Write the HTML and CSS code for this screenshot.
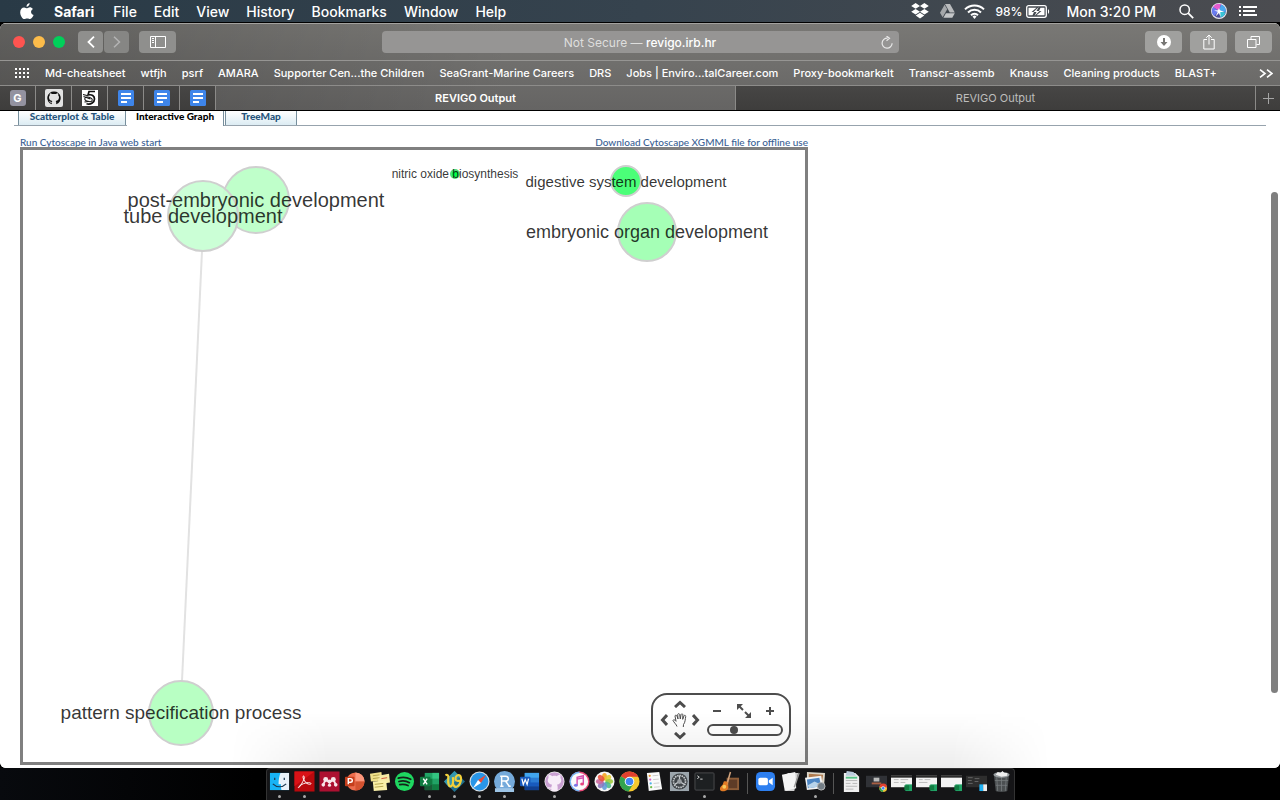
FILE: index.html
```html
<!DOCTYPE html>
<html lang="en">
<head>
<meta charset="utf-8">
<title>REVIGO Output</title>
<link rel="stylesheet" href="styles.css">
</head>
<body>
<header class="menubar">
  <nav class="menus">
    <button class="apple" aria-label="Apple menu"><svg width="14" height="17" viewBox="0 0 14 17" fill="#fff"><path d="M9.600 0C9.700 1.900 8.200 3.700 6.500 3.700 6.300 2 7.900.2 9.600 0zM9.800 4.300c1 0 2.300.6 3.100 1.700-2.700 1.600-2.300 5 .7 6.100-.6 1.600-2 4-3.500 4-1.100 0-1.500-.7-2.900-.7s-1.800.7-2.900.7C2.300 16.100.2 12.500.2 9.300.2 6.200 2.100 4.400 4.100 4.400c1.300 0 2.200.8 3.100.8.8 0 1.500-.9 2.600-.9z"/></svg></button>
    <button class="app">Safari</button>
    <button>File</button>
    <button>Edit</button>
    <button>View</button>
    <button>History</button>
    <button>Bookmarks</button>
    <button>Window</button>
    <button>Help</button>
  </nav>
  <div class="status">
    <svg class="s-dropbox" width="18" height="16" viewBox="0 0 18 16" fill="#fff"><path d="M4.600 0 9 2.900 4.600 5.700.2 2.900zM13.400 0l4.400 2.900-4.400 2.800L9 2.900zM4.600 5.900 9 8.700l-4.400 2.900L.2 8.700zM13.400 5.900l4.400 2.800-4.400 2.900L9 8.700zM9 9.800l4.300 2.800L9 15.600l-4.300-3z"/></svg>
    <svg class="s-drive" width="15" height="14" viewBox="0 0 15 14"><path d="M5 0h5l4.800 8.500h-5z" fill="#b9bbbd"/><path d="M4.600.7 7.200 5.300 2.700 13.300 0 8.700z" fill="#a4a7aa"/><path d="M5.900 9.200h8.900L12.300 13.700H3.400z" fill="#c4c6c8"/></svg>
    <svg class="s-wifi" width="21" height="15" viewBox="0 0 21 15" fill="none" stroke="#fff" stroke-width="2"><path d="M1 5.400a13.500 13.500 0 0 1 19 0M4 8.500a9.200 9.200 0 0 1 13 0M7 11.300a5 5 0 0 1 7 0"/><path d="M8.500 12.500 10.500 15l2-2.500a3 3 0 0 0-4 0z" fill="#fff" stroke="none"/></svg>
    <span class="pct">98%</span>
    <svg class="s-batt" width="24" height="13" viewBox="0 0 24 13"><rect x=".7" y=".7" width="19.600" height="11.600" rx="2" fill="none" stroke="#fff" stroke-width="1.300"/><path d="M22 4.200v4.600c1.500-.5 1.500-4.100 0-4.600z" fill="#fff"/><path d="M2.500 2.800h8L5.500 7H8l-1.500 3.200h-4zM18.500 10.200h-8L15.500 6H13l1.500-3.200h4z" fill="#fff"/><path d="M12.800 2 7.500 7h3L8.500 11 13.500 6h-3z" fill="#fff"/></svg>
    <span class="clock">Mon 3:20 PM</span>
    <svg class="s-search" width="15" height="15" viewBox="0 0 15 15" fill="none" stroke="#fff" stroke-width="1.500"><circle cx="5.700" cy="5.700" r="4.700"/><path d="m9.200 9.200 5 5" stroke-width="1.800"/></svg>
    <svg class="s-siri" width="16" height="16" viewBox="0 0 16 16"><circle cx="8" cy="8" r="7.400" fill="#4a4a9a" stroke="#e8e8ee" stroke-width="1.200"/><path d="M8 8 2 4a7 7 0 0 1 8-2.700z" fill="#e65bd0"/><path d="M8 8 10 1.400A7 7 0 0 1 14.800 9z" fill="#4aa8f0"/><path d="M8 8 2 4a7 7 0 0 0 1.200 9z" fill="#6a7df2"/><path d="m8 8 6.500 1.500a7 7 0 0 1-5 5z" fill="#39c4d6"/><path d="M8 5 9 7.300 13.500 9 9.300 9 9.500 14 8 10l-3.500 3.500L6.800 8.800 3 7.500l4-.3z" fill="#fff"/></svg>
    <svg class="s-list" width="18" height="12" viewBox="0 0 18 12" fill="#fff"><path d="M0 1h2v2H0zM4 1h14v2H4zM0 5h2v2H0zM4 5h12v2H4zM0 9h2v2H0zM4 9h14v2H4z"/></svg>
  </div>
</header>

<main class="window">
  <div class="chrome">
    <div class="toolbar">
      <div class="tools-left">
        <button class="light red" aria-label="Close"></button>
        <button class="light yellow" aria-label="Minimize"></button>
        <button class="light green" aria-label="Zoom"></button>
        <button class="tool back" aria-label="Back"><svg width="8" height="12" viewBox="0 0 8 12" fill="none" stroke="#fff" stroke-width="1.800"><path d="M7 .7 1.500 6 7 11.300"/></svg></button>
        <button class="tool forward" aria-label="Forward"><svg width="8" height="12" viewBox="0 0 8 12" fill="none" stroke="#b4b4b4" stroke-width="1.500"><path d="M1 .7 6.500 6 1 11.300"/></svg></button>
        <button class="tool wide side" aria-label="Sidebar"><svg width="16" height="12" viewBox="0 0 16 12" fill="none" stroke="#fff"><path d="M.5.500h15v11H.5zM5.500.500v11M2 2.500h2M2 4.500h2M2 6.500h2"/></svg></button>
      </div>
      <div class="address">
        <button class="url">Not Secure — <span class="host">revigo.irb.hr</span></button>
        <button class="reload" aria-label="Reload"><svg width="12" height="13" viewBox="0 0 12 13" fill="none" stroke="#e8e8e8" stroke-width="1.200"><path d="M6.500 2.200a5 5 0 1 0 4.600 5M5.500 0l3 2.300-3 2.400"/></svg></button>
      </div>
      <div class="tools-right">
        <button class="tool wide" aria-label="Downloads"><svg width="14" height="14" viewBox="0 0 14 14"><circle cx="7" cy="7" r="7" fill="#fff"/><path d="M6 3h2v4h2.500L7 11 3.500 7H6z" fill="#777674"/></svg></button>
        <button class="tool wide" aria-label="Share"><svg width="12" height="16" viewBox="0 0 12 16" fill="none" stroke="#fff"><path d="M4 5.500H.8v9.500h10.400V5.500H8M6 10.500V1M3.200 3.800 6 1l2.800 2.800"/></svg></button>
        <button class="tool wide" aria-label="Show tabs"><svg width="13" height="12" viewBox="0 0 13 12" fill="none" stroke="#fff"><path d="M.5 3.500h8.500v8H.5zM4 3V.5h8.500v8H9.500"/></svg></button>
      </div>
    </div>
    <nav class="bookmarks">
      <button class="grid-btn" aria-label="Favorites"><svg width="15" height="11" viewBox="0 0 15 11" fill="#fff"><path d="M0 0h2v2H0zM4 0h2v2H4zM8 0h2v2H8zM12 0h2v2h-2zM0 4h2v2H0zM4 4h2v2H4zM8 4h2v2H8zM12 4h2v2h-2zM0 8h2v2H0zM4 8h2v2H4zM8 8h2v2H8zM12 8h2v2h-2z"/></svg></button>
      <a href="#">Md-cheatsheet</a>
      <a href="#">wtfjh</a>
      <a href="#">psrf</a>
      <a href="#">AMARA</a>
      <a href="#">Supporter Cen...the Children</a>
      <a href="#">SeaGrant-Marine Careers</a>
      <a href="#">DRS</a>
      <a href="#">Jobs | Enviro...talCareer.com</a>
      <a href="#">Proxy-bookmarkelt</a>
      <a href="#">Transcr-assemb</a>
      <a href="#">Knauss</a>
      <a href="#">Cleaning products</a>
      <a href="#">BLAST+</a>
      <button class="more" aria-label="More bookmarks"><svg width="14" height="9" viewBox="0 0 14 9" fill="none" stroke="#fff" stroke-width="1.600"><path d="m1 .7 5 3.800-5 3.800M8 .7l5 3.800-5 3.800"/></svg></button>
    </nav>
    <div class="tabs">
      <button class="pin"><span class="g-icon">G</span></button>
      <button class="pin" aria-label="GitHub"><svg width="18" height="18" viewBox="0 0 18 18"><rect width="18" height="18" rx="2" fill="#e2e2e2"/><path d="M9 2.500a6.500 6.500 0 0 0-2.200 12.700v-1.600c-1.800.4-2.400-.6-2.800-1.500 1 .2 1.300 1 2.800.8.1-.5.300-.8.600-1C4.800 11.600 4 10.200 4 8.300c0-.9.300-1.600.8-2.100-.2-.8-.1-1.500.2-2 .8 0 1.500.4 2.100.9 1.200-.3 2.600-.3 3.800 0 .6-.5 1.300-.9 2.100-.9.300.5.400 1.200.2 2 .5.500.8 1.200.8 2.100 0 1.900-.8 3.300-3.400 3.600.4.300.6.800.6 1.500v1.800A6.500 6.500 0 0 0 9 2.500z" fill="#111"/></svg></button>
      <button class="pin" aria-label="Five"><svg width="16" height="16" viewBox="0 0 16 16"><path fill="#fff" d="M0 0h16v16H0z"/><g fill="none" stroke="#111"><path d="M13 1.500H7L6 5c4-1 6.500 1 6.500 4S9 15 4.500 13.800" stroke-width="1.700"/><ellipse cx="6.500" cy="9.300" rx="3.800" ry="2.100" transform="rotate(15 6.500 9.300)"/><path d="M1 4.500l4 1M1.500 6.500l7 2.500M2.500 12l4-.5" stroke-width="1.100"/></g></svg></button>
      <button class="pin" aria-label="Docs"><svg width="16" height="16"><use href="#docs"/></svg></button>
      <button class="pin" aria-label="Docs"><svg width="16" height="16"><use href="#docs"/></svg></button>
      <button class="pin" aria-label="Docs"><svg width="16" height="16"><use href="#docs"/></svg></button>
      <button class="tab active">REVIGO Output</button>
      <button class="tab">REVIGO Output</button>
      <button class="plus" aria-label="New tab"><svg width="11" height="11" viewBox="0 0 11 11" stroke="#a5a5a5"><path d="M0 5.500h11M5.500 0v11"/></svg></button>
    </div>
  </div>

  <section class="page">
    <nav class="page-tabs">
      <a href="#" class="ptab">Scatterplot &amp; Table</a>
      <a href="#" class="ptab current">Interactive Graph</a>
      <a href="#" class="ptab tree">TreeMap</a>
    </nav>
    <div class="content">
      <div class="links"><a href="#">Run Cytoscape in Java web start</a><a href="#">Download Cytoscape XGMML file for offline use</a></div>
      <div class="graph">
        <svg class="network" width="100%" height="100%">
          <path d="M179 101 159 531" stroke="#e2e2e2" stroke-width="2"/>
          <g stroke="#cfcfcf" stroke-width="2">
            <circle cx="233" cy="50" r="33" fill="#bfffca"/>
            <circle cx="180" cy="66" r="35" fill="#c7ffd2" fill-opacity=".92"/>
            <circle cx="158" cy="563" r="32" fill="#b8ffc3"/>
            <circle cx="432" cy="24" r="4" fill="#00ff48" stroke="#4ee077"/>
            <circle cx="603" cy="31" r="15" fill="#4bff78"/>
            <circle cx="624" cy="82" r="29" fill="#a5ffb6"/>
          </g>
          <g class="names" text-anchor="middle">
            <text x="233" y="57" font-size="20">post-embryonic development</text>
            <text x="180" y="73" font-size="20">tube development</text>
            <text x="158" y="569" font-size="19">pattern specification process</text>
            <text x="432" y="28" font-size="12">nitric oxide biosynthesis</text>
            <text x="603" y="37" font-size="15">digestive system development</text>
            <text x="624" y="88" font-size="18">embryonic organ development</text>
          </g>
        </svg>
        <div class="controls">
          <div class="pan">
            <button class="up" aria-label="Pan up"><svg width="12" height="8" viewBox="0 0 12 8"><path d="M1 7 6 2.500 11 7"/></svg></button>
            <button class="left" aria-label="Pan left"><svg width="8" height="12" viewBox="0 0 8 12"><path d="M7 1 2.500 6 7 11"/></svg></button>
            <button class="hand" aria-label="Grab"><svg width="16" height="15" viewBox="0 0 16 15"><path d="M5 13.500C4.500 11.500 1.500 9 1 7.500c.5-1.500 2-.5 3 .8L3 3c.3-1.300 1.600-1 2 0l1 3-.3-4.500c.5-1.300 1.700-1 2 0L8.300 6l.7-4.500c.5-1 1.800-.8 1.900.3L10.700 6.300l1.300-3.500c.7-1 1.900-.4 1.700.7-.4 2.500-.5 6-2.200 8l-.2 2.500"/></svg></button>
            <button class="right" aria-label="Pan right"><svg width="8" height="12" viewBox="0 0 8 12"><path d="M1 1 5.500 6 1 11"/></svg></button>
            <button class="down" aria-label="Pan down"><svg width="12" height="8" viewBox="0 0 12 8"><path d="M1 1 6 5.500 11 1"/></svg></button>
          </div>
          <div class="zoom">
            <div class="zoom-btns">
              <button aria-label="Zoom out"><svg width="8" height="8" viewBox="0 0 8 8"><path d="M0 4h8"/></svg></button>
              <button aria-label="Fit"><svg width="14" height="14" viewBox="0 0 14 14"><path d="M2 2l4 4M8 8l4 4" /><path d="M0 0h6L0 6zM14 14H8l6-6z" class="solid"/></svg></button>
              <button aria-label="Zoom in"><svg width="8" height="8" viewBox="0 0 8 8"><path d="M0 4h8M4 0v8"/></svg></button>
            </div>
            <input type="range" min="0" max="100" value="33" aria-label="Zoom level">
          </div>
        </div>
      </div>
    </div>
    <div class="scroll-thumb"></div>
    <div class="dock-shade"></div>
  </section>
</main>

<footer class="desktop">
  <div class="dock">
    <span class="item run"><svg viewBox="0 0 22 22"><path fill="#18b3f6" d="M1 2h20v18H1z"/><path fill="#e9f2fa" d="M12 2h9v18h-8c-.5-2-.6-4-.5-6H10c0-5 .8-9 2-12z"/><path d="M6 7v2.500M16 7v2.500M4 13.500c4 4 10 4 14 0" fill="none" stroke="#1c3850" stroke-width="1.300"/></svg></span>
    <span class="item run"><svg viewBox="0 0 22 22"><path fill="#b9090d" d="M.5.500h21v21H.5z"/><path fill="#d91217" d="M.5.500h21L.5 16z"/><path d="M5 17.500c2-2 4-6 5.500-9 .8-2.500-.3-4-1-3-.6 1.500 1.500 6 4 7.500 2 1.200 4.500 1.200 4.300 0-.5-1.500-7-1-11 2-1.500 1-3 2.500-1.800 2.500z" fill="none" stroke="#fff"/></svg></span>
    <span class="item"><svg viewBox="0 0 22 22"><path fill="#ac1031" d="M.5.500h21v21H.5z"/><g fill="#f7e5e9"><circle cx="7" cy="9" r="2.600"/><circle cx="15" cy="9" r="2.600"/><circle cx="11" cy="11" r="2"/><circle cx="4.500" cy="14.500" r="1.900"/><circle cx="11" cy="14.800" r="1.700"/><circle cx="17.500" cy="14.500" r="1.900"/></g><path d="M4.500 14 7 9l4 3 4-3 2.500 5" fill="none" stroke="#f7e5e9" stroke-width="2"/></svg></span>
    <span class="item"><svg viewBox="0 0 22 22"><circle cx="12" cy="11" r="9.500" fill="#ec6c4c"/><path d="M12 1.500a9.500 9.500 0 0 1 9.500 9.500H12z" fill="#fa967b"/><path d="M12 20.500a9.500 9.500 0 0 0 9.500-9.500H12z" fill="#d35230"/><rect x="1" y="6" width="10" height="10" rx="1" fill="#c43e1c"/><path d="M4.500 14V8h2.300a1.900 1.900 0 0 1 0 3.800H4.500" fill="none" stroke="#fff" stroke-width="1.500"/></svg></span>
    <span class="item run"><svg viewBox="0 0 22 22"><path fill="#efe08b" d="m1 3 12-2 1 9-12 1z"/><path fill="#f6eba5" d="m9 5 12-2 1 9-12 2z"/><path fill="#faf0a8" d="m4 11 14-1 1 10-14 1z"/><path d="m4 5 7-1M4 8l7-1M6 14l9-1M6 17l9-1" stroke="#b5a44c"/><path d="m13 8 6-1" stroke="#d55439"/></svg></span>
    <span class="item"><svg viewBox="0 0 22 22"><circle cx="11" cy="11" r="10" fill="#1ed760"/><path d="M4.500 7.500c4.500-1.300 9-.9 13 1.200M5.200 11c4-1 7.700-.6 11 1.200M6 14.300c3-.7 6-.4 8.700 1" fill="none" stroke="#15221a" stroke-width="1.800" stroke-linecap="round"/></svg></span>
    <span class="item run"><svg viewBox="0 0 22 22"><path fill="#21a366" d="M6 2h15v18H6z"/><path fill="#33c481" d="M14 2h7v6h-7z"/><path fill="#107c41" d="M6 8h8v6H6zM14 14h7v6h-7z"/><path fill="#185c37" d="M6 14h8v6H6z"/><rect y="6" width="11" height="10" x="1" rx="1" fill="#107c41"/><path d="m4.500 8 4 6m0-6-4 6" stroke="#fff" stroke-width="1.500"/></svg></span>
    <span class="item run"><svg viewBox="0 0 22 22"><path fill="#20708e" d="m11 0 11 11-11 11L0 11z"/><path fill="#3497af" d="m11 0 6 6-12 11-5-6z"/><path d="M1.500 4.500c2-1 3.500 0 3 3-.6 5 .5 9.500 3 8.500 2-1 2.200-6 1.800-9.500M9.300 11c0 4 1.500 6 4 5.500 4-1 5.500-9 3.700-11.500-2-1.800-5.500.2-5 3.500.5 2.500 3.500 2.500 6.500.5" fill="none" stroke="#f1cf3b" stroke-width="2.300"/></svg></span>
    <span class="item run"><svg viewBox="0 0 22 22"><circle cx="11" cy="11" r="10.500" fill="#d9dfe4"/><circle cx="11" cy="11" r="9.300" fill="#2996e8"/><path fill="#ed4a36" d="m18 4-5.500 8.500-3-3z"/><path fill="#fff" d="m4 18 5.500-8.500 3 3z"/></svg></span>
    <span class="item run"><svg viewBox="0 0 22 22"><circle cx="11" cy="11" r="11" fill="#75aadb"/><path d="M8 16V5.500h4c4 0 4 5 0 5H8m4 0 4 5.500M6.500 5.500H9m-2.500 10.500h3.500m5 0h2.500" fill="none" stroke="#fff" stroke-width="1.500"/><path fill="#9dc4e6" d="M1 18h20v4H1z"/></svg></span>
    <span class="item"><svg viewBox="0 0 22 22"><path fill="#2b7cd3" d="M6 2h15v18H6z"/><path fill="#41a5ee" d="M6 2h15v5H6z"/><path fill="#185abd" d="M6 12h15v4H6z"/><path fill="#103f91" d="M6 16h15v4H6z"/><rect x="1" y="6" width="11" height="10" rx="1" fill="#185abd"/><path d="m3 8 1.500 6 2-5 2 5L10 8" fill="none" stroke="#fff" stroke-width="1.300"/></svg></span>
    <span class="item run"><svg viewBox="0 0 22 22"><circle cx="11" cy="11" r="10.500" fill="#eee"/><circle cx="11" cy="11" r="9.700" fill="#c9a0d2"/><path fill="#f7edf9" d="M5 4c1.500 0 2.500.7 3.500 1.400 1.500-.4 3.500-.4 5 0C14.500 4.700 15.500 4 17 4c.5 1 .5 2.200.2 3.200C19.500 11 17 14 13.500 14.500c.7.700.8 1.500.8 2.500v4a10 10 0 0 1-6.600 0v-2.500c-2 .4-3-.5-3.700-2 1.500 0 2 1.300 3.700.8 0-1 .3-1.800.8-2.800C5 14 2.500 11 4.800 7.200 4.500 6.200 4.500 5 5 4z"/></svg></span>
    <span class="item"><svg viewBox="0 0 22 22"><circle cx="11" cy="11" r="10.500" fill="#e84b79"/><path d="M11 .5a10.500 10.500 0 0 0 0 21z" fill="#6fb3f0"/><circle cx="11" cy="11" r="9" fill="#fafafa"/><path d="M8.500 15V6.500L15 5v8.500M8.500 8.500 15 7" fill="none" stroke="#d450ae" stroke-width="1.500"/><ellipse cx="7.200" cy="15" rx="2" ry="1.600" fill="#7a77e8"/><ellipse cx="13.700" cy="13.700" rx="2" ry="1.600" fill="#e8457f"/></svg></span>
    <span class="item"><svg viewBox="0 0 22 22"><circle cx="11" cy="11" r="10.500" fill="#f6f6f6"/><g fill-opacity=".88"><ellipse cx="11" cy="6" rx="2.600" ry="4" fill="#f6a01f"/><ellipse cx="11" cy="6" rx="2.600" ry="4" fill="#e3cd30" transform="rotate(45 11 11)"/><ellipse cx="11" cy="6" rx="2.600" ry="4" fill="#9ccb3c" transform="rotate(90 11 11)"/><ellipse cx="11" cy="6" rx="2.600" ry="4" fill="#4db98a" transform="rotate(135 11 11)"/><ellipse cx="11" cy="6" rx="2.600" ry="4" fill="#5d9bd8" transform="rotate(180 11 11)"/><ellipse cx="11" cy="6" rx="2.600" ry="4" fill="#8a78be" transform="rotate(225 11 11)"/><ellipse cx="11" cy="6" rx="2.600" ry="4" fill="#c9679e" transform="rotate(270 11 11)"/><ellipse cx="11" cy="6" rx="2.600" ry="4" fill="#e9513f" transform="rotate(315 11 11)"/></g></svg></span>
    <span class="item run"><svg viewBox="0 0 22 22"><circle cx="11" cy="11" r="10.500" fill="#f7c92e"/><path d="M11 11 2 5.600A10.500 10.500 0 0 1 20.300 6H11z" fill="#e2402f"/><path d="M2 5.600A10.500 10.500 0 0 0 10 21.500l5-8z" fill="#32a350"/><circle cx="11" cy="11" r="5" fill="#fff"/><circle cx="11" cy="11" r="4" fill="#4285f4"/></svg></span>
    <span class="item"><svg viewBox="0 0 22 22"><path fill="#fafafa" d="m3 2 13-1 3 18-14 2z"/><g><circle cx="6" cy="5" r="1.200" fill="#f09a32"/><circle cx="6.500" cy="9" r="1.200" fill="#d75bc6"/><circle cx="7" cy="13" r="1.200" fill="#4db2e9"/><circle cx="7.500" cy="17" r="1.200" fill="#72bd4e"/></g><path d="m9 5 6-.5M9.500 9l6-.5M10 13l6-.5M10.500 17l6-.5" stroke="#ccc"/></svg></span>
    <span class="item"><svg viewBox="0 0 22 22"><path fill="#9ba5ac" d="M1 1h20v20H1z"/><circle cx="11" cy="11" r="8.500" fill="#3e4347"/><circle cx="11" cy="11" r="6.300" fill="none" stroke="#c7cbce" stroke-width="1.800" stroke-dasharray="1.600 .8"/><path d="M11 11V5m0 6-5 3m5-3 5 3" stroke="#c7cbce" stroke-width="1.300"/><circle cx="11" cy="11" r="2.500" fill="#9a9fa3"/></svg></span>
    <span class="item run"><svg viewBox="0 0 22 22"><rect x="1" y="2" width="20" height="18" rx="1" fill="#1d2022" stroke="#4a4c4e"/><path d="m3.500 5 2 1.500-2 1.500M6.500 8.500h2.500" fill="none" stroke="#ddd"/></svg></span>
    <span class="item"><svg viewBox="0 0 22 22"><path fill="#8b5c38" d="M8 7h13v13H8z"/><path fill="#5e3c27" d="M10 9h9v9h-9z"/><path d="M12 1 8 15" stroke="#d2a27c" stroke-width="1.600"/><path fill="#e07a24" d="M5 11c2-1 5 0 4 2s2 3 0 6-8 3-8 0 3-4 3-5z"/><circle cx="5.500" cy="16.500" r="2" fill="#f7c95c"/></svg></span>
    <span class="sep"></span>
    <span class="item"><svg viewBox="0 0 22 22"><rect x="1" y="1" width="20" height="20" rx="5" fill="#2d7ff0"/><rect x="3.500" y="7" width="10" height="8" rx="2" fill="#fff"/><path fill="#fff" d="m14.500 10 4-3v8l-4-3z"/></svg></span>
    <span class="item"><svg viewBox="0 0 22 22"><path fill="#cfcfcf" d="M8 2h11l-4 19H6z"/><path fill="#f5f5f5" d="m2 4 14-3 1 17-12 3z"/><path d="m20 2-5 15" stroke="#999" stroke-width="1.500"/></svg></span>
    <span class="item run"><svg viewBox="0 0 22 22"><path fill="#dcd6c8" d="m2 1 19 1-1 13-18-2z"/><path fill="#b07b4f" d="m4 3 15 1-1 6-14-1z"/><path fill="#f3f3f3" d="m0 7 17-2 2 13-17 2z"/><path fill="#4d86c4" d="m2 9 13-2 2 9-14 2z"/><path fill="#b8d3ea" d="m3 15 7-4 6 3v2L4 18z"/><circle cx="17" cy="16" r="4" fill="#737d85" stroke="#bbb"/></svg></span>
    <span class="sep"></span>
    <span class="item"><svg viewBox="0 0 22 22"><path fill="#efefef" d="M3 2h12l4 4v16H3z"/><path fill="#bcd" d="m6 0 7 1 3 4H5z"/><path d="M5 7h12" stroke="#57c488" stroke-width="2"/><path d="M5 10h12M5 13h5m2 0h5M5 16h12M5 19h8" stroke="#b7b7b7"/></svg></span>
    <span class="item"><svg viewBox="0 0 22 22"><path fill="#303237" d="M0 5h22v12H0z"/><path fill="#bbb" d="M8 7h6v4H8z"/><path fill="#a85f43" d="M6 12h10v2H6z"/><circle cx="18" cy="18" r="4" fill="#f1c232"/><path d="M14 17a4 4 0 0 1 8 0z" fill="#e2402f"/><path d="M14 17.500a4 4 0 0 0 4 4.500v-4z" fill="#32a350"/><circle cx="18" cy="18" r="1.800" fill="#4285f4" stroke="#fff" stroke-width=".6"/></svg></span>
    <span class="item"><svg viewBox="0 0 22 22"><use href="#sheet"/><path d="M3 9h5m2 0h8M3 12h5m2 0h5" stroke="#bbb"/></svg></span>
    <span class="item"><svg viewBox="0 0 22 22"><use href="#sheet"/><path d="M3 9h4m2 0h6M3 12h9" stroke="#bbb"/></svg></span>
    <span class="item"><svg viewBox="0 0 22 22"><use href="#sheet"/></svg></span>
    <span class="item"><svg viewBox="0 0 22 22"><path fill="#2e2e2e" d="M0 5h22v12H0z"/><path d="M2 7h5M2 10h4M9 8h5M9 11h4M2 13h5" stroke="#666"/><path fill="#20b3f5" d="M14 14h4v7h-4z"/><path fill="#eee" d="M18 14h4v7h-4z"/></svg></span>
    <span class="item"><svg viewBox="0 0 22 22"><path fill="#4b4f51" d="m3 4 2 17c3 1.300 9 1.300 12 0l2-17z"/><path d="m6 6 1 15m4-15v15m5-15-1 15M4 10h14M5 15h12" stroke="#787d80" stroke-width=".8"/><ellipse cx="11" cy="4" rx="8.500" ry="3" fill="#989da0"/><path fill="#eee" d="m5 4 2-3 3 1 2-2 2 2 3 0 0 3-6 1z"/></svg></span>
  </div>
</footer>

<svg width="0" height="0" class="defs">
  <symbol id="docs" viewBox="0 0 16 16"><rect width="16" height="16" rx="1.500" fill="#3e85ea"/><path d="M3 4h10M3 8h10M3 12h6" stroke="#fff" stroke-width="2"/></symbol>
  <symbol id="sheet" viewBox="0 0 22 22"><path fill="#f3f3f3" d="M0 5h22v12H0z"/><path fill="#2b2b2b" d="M0 5h22v2H0z"/><path fill="#21a366" d="M15 14h7v7h-7z"/><path fill="#107c41" d="M14 15h5v5h-5z"/></symbol>
</svg>
</body>
</html>
```
FILE: styles.css
```css
* { box-sizing: border-box; }

body {
  margin: 0;
  height: 100vh;
  display: flex;
  flex-direction: column;
  background: #000;
  font-family: Inter, Roboto, sans-serif;
  overflow: hidden;
}

button {
  margin: 0;
  padding: 0;
  border: 0;
  background: none;
  color: inherit;
  font: inherit;
}

a { color: inherit; text-decoration: none; }
svg { display: block; flex: none; }
.defs { position: absolute; }

/* Menu bar */
.menubar {
  flex: none;
  height: 22px;
  display: flex;
  justify-content: space-between;
  align-items: center;
  padding: 0 23px 0 20px;
  background: linear-gradient(90deg, #293a46, #36434e 50%, #4b4c50);
  color: #fff;
  font-size: 14px;
  font-weight: 500;
  white-space: nowrap;
}
.menus { display: flex; align-items: center; gap: 17px; }
.apple { margin-right: 3px; }
.app { font-weight: 700; margin-right: 2px; }
.status { display: flex; align-items: center; }
.s-drive { margin-left: 11px; }
.s-wifi { margin-left: 9px; }
.pct { margin-left: 10px; font-size: 12px; }
.s-batt { margin-left: 4px; }
.clock { margin-left: 16px; }
.s-search { margin-left: 23px; }
.s-siri { margin-left: 17px; }
.s-list { margin-left: 12px; }

/* Browser window */
.window {
  flex: 1;
  min-height: 0;
  display: flex;
  flex-direction: column;
  margin-top: 1px;
  border-radius: 6px;
  overflow: hidden;
  background: #fff;
}
.chrome {
  flex: none;
  color: #fff;
  background: linear-gradient(90deg, #0003, #0000 40%), linear-gradient(#797875, #656463);
  border-top: 1px solid #a3a29f;
  border-bottom: 1px solid #000;
}
.toolbar {
  height: 37px;
  display: grid;
  grid-template-columns: 1fr minmax(300px, 517px) 1fr;
  align-items: center;
  padding: 0 8px;
  border-bottom: 1px solid #969593;
}
.tools-left, .tools-right { display: flex; align-items: center; }
.tools-left { padding-left: 5px; }
.tools-right { justify-content: flex-end; gap: 8px; }
.light { width: 12px; height: 12px; border-radius: 50%; margin-right: 8px; }
.red { background: #ff5450; }
.yellow { background: #fdbc4a; }
.green { background: #00d05a; }
.tool {
  width: 25px;
  height: 22px;
  display: flex;
  align-items: center;
  justify-content: center;
  border-radius: 4px;
  background: #a0a09e;
}
.tools-left .tool { background: #8f8f8d; }
.back { margin-left: 5px; }
.forward { margin-left: 1px; }
.tools-left .forward { background: #868684; }
.tool.wide { width: 37px; }
.side { margin-left: 10px; }
.address {
  height: 22px;
  display: grid;
  grid-template-columns: 1fr auto 1fr;
  align-items: center;
  padding: 0 6px;
  border-radius: 4px;
  background: #969594;
  font-size: 12px;
  color: #dededd;
}
.url { grid-column: 2; }
.host { color: #fff; font-weight: 500; }
.reload { justify-self: end; }

.bookmarks {
  height: 25px;
  display: flex;
  align-items: center;
  gap: 15px;
  padding: 0 7px 0 15px;
  border-bottom: 1px solid #8d8c8a;
  font-size: 11px;
  font-weight: 500;
  white-space: nowrap;
}
.more { margin-left: auto; }

.tabs { height: 24px; display: flex; font-size: 11px; }
.pin, .tab, .plus {
  display: flex;
  align-items: center;
  justify-content: center;
  background: linear-gradient(#474645, #3e3d3c);
  border-right: 1px solid #8b8a88;
}
.pin { width: 36px; flex: none; }
.g-icon {
  width: 16px;
  height: 16px;
  border-radius: 3px;
  background: #9392a0;
  font-size: 11px;
  line-height: 16px;
  font-weight: 700;
}
.tab { flex: 1; color: #bdbdbc; }
.tab.active { background: none; color: #fff; font-weight: 600; }
.plus { width: 24px; flex: none; border-right: 0; }

/* Page */
.page {
  flex: 1;
  min-height: 0;
  position: relative;
  display: flex;
  flex-direction: column;
  padding: 0 14px 3px;
  background: #fff;
  font-family: "Trebuchet MS", Lato, "Open Sans", sans-serif;
  font-size: 10px;
}
.page-tabs {
  flex: none;
  height: 15px;
  display: flex;
  padding-left: 4px;
  border-bottom: 1px solid #97a3ad;
}
.ptab {
  height: 14px;
  min-width: 108px;
  text-align: center;
  border-right: 1px solid #778f9d;
  border-left: 1px solid #778f9d;
  background: linear-gradient(#fff, #dcecf3);
  color: #26547c;
  font-weight: 900;
  line-height: 10px;
  white-space: nowrap;
}
.ptab.current { height: 15px; min-width: 97px; margin-left: 1px; border-left: 0; background: #fff; color: #000; }
.ptab.tree { min-width: 72px; margin-left: 1px; }
.content {
  flex: 1;
  min-height: 0;
  display: flex;
  flex-direction: column;
  width: 100%;
  max-width: 794px;
  padding: 10px 0 0 6px;
}
.links {
  display: flex;
  justify-content: space-between;
  height: 11px;
  font-size: 10px;
  font-weight: 500;
  line-height: 12px;
  color: #3a5f94;
}
.links a { height: 12px; border-bottom: 1px solid #7590b5; }
.graph {
  flex: 1;
  min-height: 0;
  position: relative;
  border: 3px solid #808080;
}
.network { position: absolute; inset: 0; }
.names { font-family: "Liberation Sans", Arial, sans-serif; fill: #000; fill-opacity: .8; }

.controls {
  position: absolute;
  right: 14px;
  bottom: 15px;
  display: flex;
  gap: 5px;
  padding: 4px 6px 4px 5px;
  border: 2px solid #4d4d4d;
  border-radius: 16px;
}
.controls path { fill: none; stroke: #4d4d4d; stroke-width: 3; }
.controls .zoom-btns path { stroke-width: 2; }
.controls .zoom-btns .solid { fill: #4d4d4d; stroke: none; }
.controls .hand path { stroke-width: 1; }
.pan {
  display: grid;
  grid-template-columns: 12px 20px 12px;
  grid-template-rows: 10px 22px 10px;
  place-items: center;
}
.up, .down { grid-column: 1 / 4; }
.zoom { display: flex; flex-direction: column; padding-top: 4px; }
.zoom-btns {
  display: flex;
  justify-content: space-between;
  align-items: center;
  height: 16px;
  padding: 0 9px 0 6px;
}
.zoom input {
  appearance: none;
  width: 76px;
  height: 12px;
  margin: 5px 0 0;
  border: 2px solid #4d4d4d;
  border-radius: 6px;
  background: none;
}
.zoom input::-webkit-slider-thumb {
  appearance: none;
  width: 8px;
  height: 8px;
  border-radius: 50%;
  background: #4d4d4d;
}
.scroll-thumb {
  position: absolute;
  right: 2px;
  top: 81px;
  bottom: 75px;
  width: 7px;
  border-radius: 4px;
  background: #7f7f7f;
}
.dock-shade {
  position: absolute;
  left: 18%;
  right: 18%;
  bottom: 0;
  height: 56px;
  background: linear-gradient(#0000, #00000012);
  mask-image: linear-gradient(90deg, #0000, #000 12%, #000 88%, #0000);
  pointer-events: none;
}

/* Dock */
.desktop {
  flex: none;
  height: 32px;
  display: flex;
  justify-content: center;
  background: linear-gradient(90deg, #080a0e, #000 20%, #000);
}
.dock {
  display: flex;
  align-items: flex-start;
  border: 1px solid #333;
  border-bottom: 0;
  border-radius: 4px 4px 0 0;
  background: #151517;
}
.item {
  width: 25px;
  height: 31px;
  display: flex;
  flex-direction: column;
  align-items: center;
  gap: 3px;
  padding-top: 2px;
}
.item svg { width: 21px; height: 21px; }
.run::after { content: ""; width: 3px; height: 3px; border-radius: 50%; background: #aaa; }
.sep { width: 1px; height: 21px; margin: 4px 5px; background: #555; }
```
